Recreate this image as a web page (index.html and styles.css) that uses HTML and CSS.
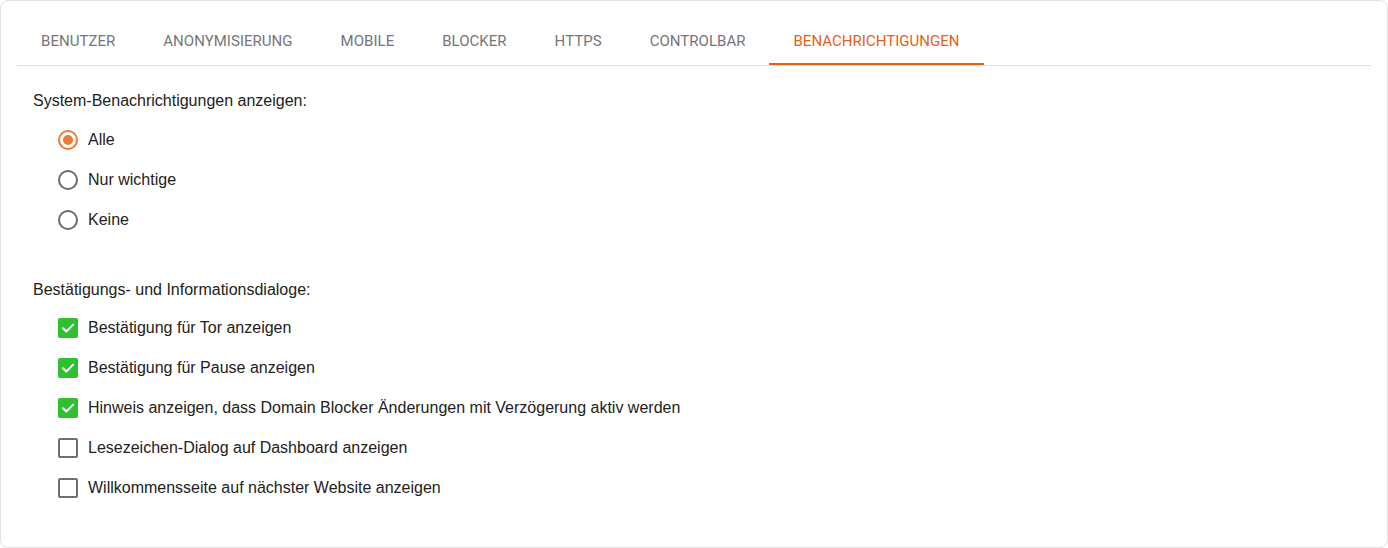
FILE: index.html
```html
<!DOCTYPE html>
<html lang="de">
<head>
<meta charset="utf-8">
<title>Einstellungen</title>
<link rel="stylesheet" href="styles.css">
</head>
<body>
<div class="card">
  <nav class="tabs">
    <div class="tab">BENUTZER</div>
    <div class="tab">ANONYMISIERUNG</div>
    <div class="tab">MOBILE</div>
    <div class="tab">BLOCKER</div>
    <div class="tab">HTTPS</div>
    <div class="tab">CONTROLBAR</div>
    <div class="tab active">BENACHRICHTIGUNGEN</div>
  </nav>
  <div class="content">
    <section class="group">
      <div class="group-title">System-Benachrichtigungen anzeigen:</div>
      <div class="options">
        <label class="option"><span class="radio checked"></span><span>Alle</span></label>
        <label class="option"><span class="radio"></span><span>Nur wichtige</span></label>
        <label class="option"><span class="radio"></span><span>Keine</span></label>
      </div>
    </section>
    <section class="group second">
      <div class="group-title">Bestätigungs- und Informationsdialoge:</div>
      <div class="options">
        <label class="option"><span class="checkbox checked"><svg viewBox="0 0 20 20" width="20" height="20"><path d="M5 10.2l3.3 3.3L15.2 6.6" fill="none" stroke="#fff" stroke-width="2" stroke-linecap="round" stroke-linejoin="round"/></svg></span><span>Bestätigung für Tor anzeigen</span></label>
        <label class="option"><span class="checkbox checked"><svg viewBox="0 0 20 20" width="20" height="20"><path d="M5 10.2l3.3 3.3L15.2 6.6" fill="none" stroke="#fff" stroke-width="2" stroke-linecap="round" stroke-linejoin="round"/></svg></span><span>Bestätigung für Pause anzeigen</span></label>
        <label class="option"><span class="checkbox checked"><svg viewBox="0 0 20 20" width="20" height="20"><path d="M5 10.2l3.3 3.3L15.2 6.6" fill="none" stroke="#fff" stroke-width="2" stroke-linecap="round" stroke-linejoin="round"/></svg></span><span>Hinweis anzeigen, dass Domain Blocker Änderungen mit Verzögerung aktiv werden</span></label>
        <label class="option"><span class="checkbox"></span><span>Lesezeichen-Dialog auf Dashboard anzeigen</span></label>
        <label class="option"><span class="checkbox"></span><span>Willkommensseite auf nächster Website anzeigen</span></label>
      </div>
    </section>
  </div>
</div>
</body>
</html>
```
FILE: styles.css
```css
html, body {
  margin: 0;
  padding: 0;
  background: #ffffff;
}
body {
  font-family: "Liberation Sans", Arial, sans-serif;
  color: #222222;
}
.card {
  box-sizing: border-box;
  width: 1388px;
  height: 548px;
  border: 1px solid #e2e2e2;
  border-radius: 8px;
  padding: 16px 16px 0 16px;
  background: #fff;
}
.tabs {
  display: flex;
  border-bottom: 1px solid #e0e0e0;
  height: 48px;
}
.tab {
  font-family: Roboto, "Liberation Sans", sans-serif;
  font-size: 15px;
  color: #75767a;
  padding: 0 24px;
  height: 48px;
  line-height: 48px;
  box-sizing: border-box;
  letter-spacing: 0.03px;
}
.tab.active {
  color: #ea5f13;
  border-bottom: 2px solid #ea5f13;
}
.content {
  padding: 26px 16px 0 16px;
}
.group-title {
  font-size: 16px;
  line-height: 18px;
}
.options {
  display: flex;
  flex-direction: column;
  padding: 10px 0 0 25px;
}
.option {
  display: flex;
  align-items: center;
  gap: 10px;
  height: 40px;
  font-size: 16px;
}
.group.second {
  margin-top: 41px;
}
.group.second .options {
  padding-top: 9px;
}
.radio {
  box-sizing: border-box;
  width: 20px;
  height: 20px;
  border-radius: 50%;
  border: 2px solid #6b6b6b;
  display: flex;
  align-items: center;
  justify-content: center;
}
.radio.checked {
  border-color: #ef7a32;
}
.radio.checked::after {
  content: "";
  width: 10px;
  height: 10px;
  border-radius: 50%;
  background: #ef7a32;
}
.checkbox {
  box-sizing: border-box;
  width: 20px;
  height: 20px;
  border-radius: 2px;
  border: 2px solid #6f6f6f;
  display: flex;
  align-items: center;
  justify-content: center;
}
.checkbox.checked {
  border: none;
  background: #2dc22d;
}
.checkbox svg {
  display: block;
}
```
